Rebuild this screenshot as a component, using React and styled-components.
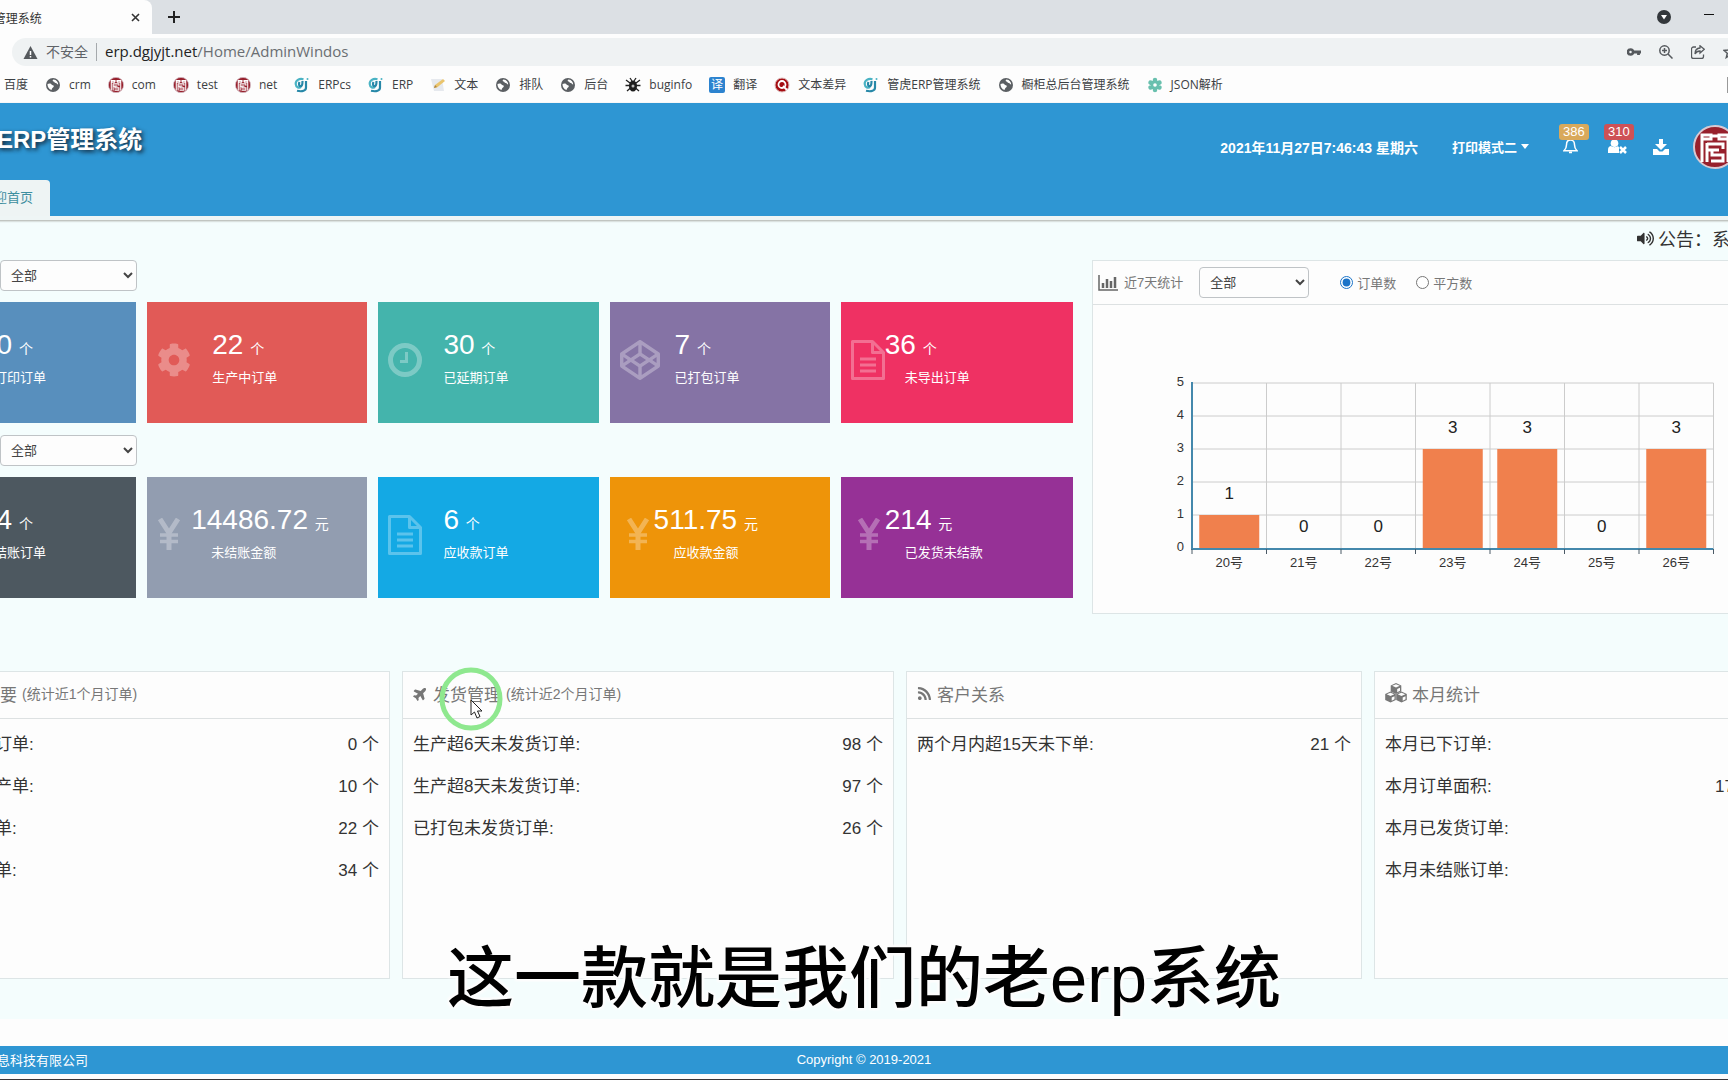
import React, { useState } from 'react'
import styled, { createGlobalStyle } from 'styled-components'
import { FaCog, FaCodepen, FaPlane, FaRss, FaVolumeUp } from 'react-icons/fa'

const bookmarks = [
  { icon: null, text: '百度' },
  { icon: 'globe', text: 'crm' },
  { icon: 'seal', text: 'com' },
  { icon: 'seal', text: 'test' },
  { icon: 'seal', text: 'net' },
  { icon: 'swirl', text: 'ERPcs' },
  { icon: 'swirl', text: 'ERP' },
  { icon: 'note', text: '文本' },
  { icon: 'globe', text: '排队' },
  { icon: 'globe', text: '后台' },
  { icon: 'bug', text: 'buginfo' },
  { icon: 'yi', text: '翻译' },
  { icon: 'diff', text: '文本差异' },
  { icon: 'swirl', text: '管虎ERP管理系统' },
  { icon: 'globe', text: '橱柜总后台管理系统' },
  { icon: 'flower', text: 'JSON解析' },
]

const orderCards = [
  { color: '#588fbd', icon: 'file', value: '10', unit: '个', label: '未打印订单' },
  { color: '#e15a57', icon: 'cog', value: '22', unit: '个', label: '生产中订单' },
  { color: '#44b4ac', icon: 'clock', value: '30', unit: '个', label: '已延期订单' },
  { color: '#8573a5', icon: 'codepen', value: '7', unit: '个', label: '已打包订单' },
  { color: '#ef3163', icon: 'file', value: '36', unit: '个', label: '未导出订单', wide: true },
]

const moneyCards = [
  { color: '#4d5860', icon: 'file', value: '34', unit: '个', label: '未结账订单' },
  { color: '#929db0', icon: 'yen', value: '14486.72', unit: '元', label: '未结账金额', wide: true },
  { color: '#14a9e4', icon: 'file', value: '6', unit: '个', label: '应收款订单' },
  { color: '#ee9409', icon: 'yen', value: '511.75', unit: '元', label: '应收款金额', wide: true, indent: true },
  { color: '#963196', icon: 'yen', value: '214', unit: '元', label: '已发货未结款', wide: true, indent: true },
]

const days = [
  { day: '20号', count: 1 },
  { day: '21号', count: 0 },
  { day: '22号', count: 0 },
  { day: '23号', count: 3 },
  { day: '24号', count: 3 },
  { day: '25号', count: 0 },
  { day: '26号', count: 3 },
]

const panels = [
  {
    icon: 'list', title: '订单概要', note: '(统计近1个月订单)',
    rows: [['未打印的订单:', '0 个'], ['未排产生产单:', '10 个'], ['生产中订单:', '22 个'], ['未结账订单:', '34 个']],
  },
  {
    icon: 'plane', title: '发货管理', note: '(统计近2个月订单)',
    rows: [['生产超6天未发货订单:', '98 个'], ['生产超8天未发货订单:', '97 个'], ['已打包未发货订单:', '26 个']],
  },
  {
    icon: 'rss', title: '客户关系',
    rows: [['两个月内超15天未下单:', '21 个']],
  },
  {
    icon: 'cubes', title: '本月统计', area: true,
    rows: [['本月已下订单:', ''], ['本月订单面积:', '17'], ['本月已发货订单:', ''], ['本月未结账订单:', '']],
  },
]

function Seal({ size }) {
  return (
    <svg width={size} height={size} viewBox='0 0 44 44' aria-hidden='true'>
      <circle cx='22' cy='22' r='21' fill='#97202c' stroke='#d9c9d2' strokeWidth='2' />
      <g fill='none' stroke='#fff' strokeWidth='3'>
        <path d='M9 37V10h9v4H9M35 37V10H26v4h9M18 11h8M14 19h16v5M14 18v19M14 25h12M19 25v5h11v6H18' />
      </g>
    </svg>
  )
}

function BookmarkIcon({ name }) {
  if (name === 'seal') return <Seal size={16} />
  return (
    <svg width='16' height='16' viewBox='0 0 16 16' aria-hidden='true'>
      {name === 'globe' && <>
        <circle cx='8' cy='8' r='7' fill='#5b5f63' />
        <path d='M2.500 7c2-1 3.500-.5 4 .5s2.300.3 2.300 1.800-1.500 1.200-1.700 2.200L6.500 13C4 12.300 2.300 10 2.500 7zM8.500 2.500c-1.200.5-1 1.800 0 2 1 .2.800 1.500 2.300 1.500 1.200 0 1 1.600 2.400 1.600C13.200 5 11.500 2.800 8.500 2.500z' fill='#fff' />
      </>}
      {name === 'swirl' && <>
        <path d='M9.500 2.200C5 1 1.500 3.500 1.700 7s3.800 4.500 5.300 3' fill='none' stroke='#4ab3c4' strokeWidth='2.200' />
        <path d='M5.500 5c-1 2-.5 4.200 1.200 4.200S8.500 6 8.500 4M12 4v6.500c0 3.200-3.500 4.500-9 3.300' fill='none' stroke='#2788a8' strokeWidth='2.200' />
        <circle cx='13.500' cy='2' r='1' fill='#4ab3c4' />
      </>}
      {name === 'note' && <>
        <path d='M1 2h11l2 12H4z' fill='#e6e9ee' />
        <path d='M4 11l1-3 8-6 2 2-8 6.500z' fill='#eac46c' />
        <path d='M4 11l1-3 2 2z' fill='#ab8444' />
      </>}
      {name === 'bug' && <>
        <path d='M1 3l4 3M15 3l-4 3M0.500 8.500H5M15.500 8.500H11M2 14l3.500-3M14 14l-3.500-3M5 1l2 3M11 1L9 4' stroke='#222' strokeWidth='1.300' />
        <ellipse cx='8' cy='9' rx='4' ry='5.500' fill='#1d1d1d' />
        <circle cx='8' cy='9' r='1.500' fill='#bbb' />
      </>}
      {name === 'yi' && <>
        <rect width='16' height='16' rx='2' fill='#2c83cf' />
        <text x='8' y='12' textAnchor='middle' fontSize='12' fill='#fff'>译</text>
      </>}
      {name === 'diff' && <>
        <circle cx='8' cy='8' r='7' fill='#a50d12' stroke='#dbb' />
        <circle cx='8' cy='7.500' r='3.500' fill='none' stroke='#fff' strokeWidth='1.800' />
        <path d='M9 9l4 4' stroke='#fff' strokeWidth='1.800' />
      </>}
      {name === 'flower' && <>
        <g stroke='#69c0ae' strokeWidth='4.500' strokeLinecap='round'>
          <path d='M8 3v10M3.500 5.500l9 5M12.500 5.500l-9 5' />
        </g>
        <circle cx='8' cy='8' r='1.800' fill='#fff' />
      </>}
    </svg>
  )
}

function CardIcon({ name }) {
  if (name === 'cog') return <FaCog size={34} />
  if (name === 'codepen') return <FaCodepen size={40} />
  if (name === 'clock') {
    return (
      <svg width='34' height='34' viewBox='0 0 34 34' fill='none' stroke='currentColor'>
        <circle cx='17' cy='17' r='14.500' strokeWidth='5' />
        <path d='M18.500 9v9.500H12' strokeWidth='3' />
      </svg>
    )
  }
  if (name === 'yen') {
    return (
      <svg width='24' height='34' viewBox='4 3 24 34' fill='none' stroke='currentColor'>
        <path d='M7 4l9 14 9-14M16 17v18' strokeWidth='5' />
        <path d='M7 20h18M7 26.500h18' strokeWidth='3.500' />
      </svg>
    )
  }
  return (
    <svg width='34' height='40' viewBox='0 0 34 40' fill='none' stroke='currentColor' strokeWidth='3' strokeLinejoin='round'>
      <path d='M1.500 1.500h20l11 11v26h-31zM21.500 1.500v11h11M9 19h16M9 25h16M9 31h16' />
    </svg>
  )
}

function PanelIcon({ name }) {
  if (name === 'plane') return <TiltedPlane size={15} />
  if (name === 'rss') return <FaRss size={15} />
  if (name === 'cubes') {
    return (
      <svg width='22' height='20' viewBox='0 0 22 20'>
        {[[11, 5.500], [5.500, 14], [16.500, 14]].map(([x, y]) => (
          <g key={x} transform={`translate(${x} ${y})`}>
            <path d='M0-5.500L5.300-3v6L0 5.500-5.300 3v-6z' fill='#777' />
            <path d='M-3.800-2.700L0-4.300l3.800 1.600L0-1.100zM1.200.5L4-.8v3L1.200 3.700z' fill='#fdfdfd' />
          </g>
        ))}
      </svg>
    )
  }
  return (
    <svg width='17' height='16' viewBox='0 0 17 16' stroke='#777' strokeWidth='2'>
      <path d='M0 3h3M5 3h12M0 8h3M5 8h12M0 13h3M5 13h12' />
    </svg>
  )
}

function StatRow({ id, cards }) {
  return (
    <>
      <FilterRow>
        <Select id={id} aria-label='客户' $width='137px'>
          <option>全部</option>
        </Select>
      </FilterRow>
      <Cards>
        {cards.map((card) => (
          <Card key={card.label} $color={card.color}>
            <CardMark $indent={card.indent}>
              <CardIcon name={card.icon} />
            </CardMark>
            <CardValue $wide={card.wide}>
              {card.value} <small>{card.unit}</small>
            </CardValue>
            <CardLabel $wide={card.wide}>{card.label}</CardLabel>
          </Card>
        ))}
      </Cards>
    </>
  )
}

function WeekChart() {
  const left = 99
  const base = 243
  const step = 33
  const col = 74.5
  const right = left + col * days.length
  return (
    <svg width='718' height='308' viewBox='0 0 718 308' role='img' aria-label='近7天统计'>
      {[1, 2, 3, 4, 5].map((n) => (
        <line key={n} x1={left} x2={right} y1={base - n * step} y2={base - n * step} stroke='#ccc' />
      ))}
      {days.map((d, i) => (
        <line key={d.day} x1={left + (i + 1) * col} x2={left + (i + 1) * col} y1={base - 5 * step} y2={base} stroke='#ccc' />
      ))}
      {[0, 1, 2, 3, 4, 5].map((n) => (
        <text key={n} x='91' y={base - n * step + 3} textAnchor='end' fontSize='13' fill='#333'>{n}</text>
      ))}
      {days.map((d, i) => {
        const mid = left + (i + 0.5) * col
        return (
          <g key={d.day}>
            <rect x={mid - 30} y={base - d.count * step} width='60' height={d.count * step} fill='#f0804d' />
            <text x={mid} y={base - d.count * step - 16} textAnchor='middle' fontSize='17' fill='#222'>{d.count}</text>
            <text x={mid} y='262' textAnchor='middle' fontSize='13' fill='#333'>{d.day}</text>
          </g>
        )
      })}
      <path d={`M${left} ${base - 5 * step - 1}V${base + 1}H${right}`} fill='none' stroke='#4488ac' strokeWidth='2' />
      {[0, 1, 2, 3, 4, 5, 6, 7].map((n) => (
        <line key={n} x1={left + n * col} x2={left + n * col} y1={base + 1} y2={base + 6} stroke='#4b5a66' />
      ))}
    </svg>
  )
}

function App() {
  const [mode, setMode] = useState('orders')

  return (
    <Screen>
      <GlobalStyle />
      <Page>
        <TabStrip>
          <BrowserTab>
            <span>管虎ERP管理系统</span>
            <IconButton aria-label='关闭'>
              <svg width='9' height='9' viewBox='0 0 9 9' stroke='#333' strokeWidth='1.600'><path d='M1 1l7 7M8 1L1 8' /></svg>
            </IconButton>
          </BrowserTab>
          <IconButton aria-label='新标签页'>
            <svg width='12' height='12' viewBox='0 0 12 12' stroke='#222' strokeWidth='2'><path d='M6 0v12M0 6h12' /></svg>
          </IconButton>
          <WindowButtons>
            <svg width='16' height='16' viewBox='0 0 16 16'>
              <circle cx='8' cy='8' r='7' fill='#33373b' />
              <path d='M5 6h6l-3 4.500z' fill='#fff' />
            </svg>
            <svg width='10' height='6' viewBox='0 0 10 6'><path d='M0 0.500h10' stroke='#111' /></svg>
          </WindowButtons>
        </TabStrip>
        <Toolbar>
          <AddressBar>
            <svg width='15' height='13' viewBox='0 0 14 13'>
              <path d='M7 0l7 13H0z' fill='#55595d' />
              <path d='M7 5v4M7 10v1.500' stroke='#fff' strokeWidth='1.500' />
            </svg>
            <Unsafe>不安全</Unsafe>
            <Url>erp.dgjyjt.net<span>/Home/AdminWindos</span></Url>
            <AddressTools>
              <svg width='14' height='14' viewBox='0 0 14 14' fill='none' stroke='#55595d'>
                <circle cx='3.500' cy='7' r='2.500' strokeWidth='2.500' />
                <path d='M6 7h8M11.500 7v3' strokeWidth='2.800' />
              </svg>
              <svg width='14' height='14' viewBox='0 0 14 14' fill='none' stroke='#55595d' strokeWidth='1.500'>
                <circle cx='5.500' cy='5.500' r='4.700' /><path d='M9 9l4.500 4.500M3 5.500h5M5.500 3v5' />
              </svg>
              <svg width='14' height='14' viewBox='0 0 14 14' fill='none' stroke='#55595d' strokeWidth='1.300'>
                <path d='M5 2H2.500a2 2 0 0 0-2 2v7.500a2 2 0 0 0 2 2h8a2 2 0 0 0 2-2V9.500M9 .8l4.300 3.500L9 8V6C6.500 6 5 7 4 9c0-3.500 2-5.800 5-6z' />
              </svg>
              <svg width='14' height='14' viewBox='0 0 14 14' fill='none' stroke='#55595d' strokeWidth='1.500'>
                <path d='M7 1l1.700 4 4.300.4-3.300 2.900 1 4.200L7 10.200l-3.700 2.300 1-4.200L1 5.400 5.300 5z' />
              </svg>
            </AddressTools>
          </AddressBar>
        </Toolbar>
        <Bookmarks>
          {bookmarks.map((mark) => (
            <a href='#bookmark' key={mark.text}>
              {mark.icon && <BookmarkIcon name={mark.icon} />}
              {mark.text}
            </a>
          ))}
          <ReadingList width='14' height='16' viewBox='0 0 14 16'>
            <path d='M1 0v16M1 1h12v14H1' fill='none' stroke='#999' strokeWidth='2' />
          </ReadingList>
        </Bookmarks>

        <Header>
          <HeaderTop>
            <h1>管虎ERP管理系统</h1>
            <HeaderTools>
              <time>2021年11月27日7:46:43 星期六</time>
              <PrintMode>打印模式二<i /></PrintMode>
              <HeaderButton aria-label='通知'>
                <svg width='15' height='15' viewBox='0 0 15 15' fill='none' stroke='#fff' strokeWidth='1.500'>
                  <path d='M7.500 1c-3 0-4 2.200-4 4.700 0 3-1 4.600-2.500 6h13c-1.500-1.400-2.500-3-2.500-6C11.500 3.200 10.500 1 7.500 1zM6 13.500h3' />
                </svg>
                <Badge $color='#d9a95b'>386</Badge>
              </HeaderButton>
              <HeaderButton aria-label='客户'>
                <svg width='19' height='15' viewBox='0 0 19 15' fill='#fff'>
                  <circle cx='6.500' cy='4.300' r='3.800' />
                  <path d='M0 14v-3c0-3 1.500-4 3-4 1 .8 2 1.200 3.500 1.200S9 7.800 10 7l1 1.500V14z' />
                  <path d='M12 8l6 6M18 8l-6 6' stroke='#fff' strokeWidth='2.500' />
                </svg>
                <Badge $color='#ce5156'>310</Badge>
              </HeaderButton>
              <DownloadButton aria-label='下载'>
                <svg width='16' height='16' viewBox='0 0 16 16' fill='#fff'>
                  <path d='M6 0h4v5h4l-6 6-6-6h4z' />
                  <path d='M0 10h4l2.500 2.500h3L12 10h4v6H0z' />
                </svg>
              </DownloadButton>
              <Seal size={44} />
            </HeaderTools>
          </HeaderTop>
          <PageTab href='#home'>欢迎首页</PageTab>
        </Header>

        <Main>
          <Notice>
            <FaVolumeUp size={17} />
            <span>公告：系统</span>
          </Notice>
          <Overview>
            <Stats>
              <StatRow id='order-filter' cards={orderCards} />
              <StatRow id='money-filter' cards={moneyCards} />
            </Stats>
            <ChartPanel>
              <ChartHead>
                <svg width='20' height='16' viewBox='0 0 20 16' fill='none' stroke='#666'>
                  <path d='M1 0v15h19' strokeWidth='1.500' />
                  <path d='M5 13V8M9 13V4M13 13V6M17 13V2' strokeWidth='2.500' />
                </svg>
                <label htmlFor='chart-filter'>近7天统计</label>
                <Select id='chart-filter' $width='110px'>
                  <option>全部</option>
                </Select>
                <Radios>
                  <label>
                    <input type='radio' name='mode' checked={mode === 'orders'} onChange={() => setMode('orders')} />
                    订单数
                  </label>
                  <label>
                    <input type='radio' name='mode' checked={mode === 'area'} onChange={() => setMode('area')} />
                    平方数
                  </label>
                </Radios>
              </ChartHead>
              <WeekChart />
            </ChartPanel>
          </Overview>
          <Panels>
            {panels.map((panel) => (
              <Panel key={panel.title}>
                <h2>
                  <PanelIcon name={panel.icon} />
                  {panel.title}
                  {panel.note && <small>{panel.note}</small>}
                </h2>
                <ul>
                  {panel.rows.map(([name, value]) => (
                    <li key={name}>
                      <span>{name}</span>
                      <PanelValue $area={panel.area}>{value}</PanelValue>
                    </li>
                  ))}
                </ul>
              </Panel>
            ))}
          </Panels>
        </Main>

        <Footer>
          <span>东莞市管虎信息科技有限公司</span>
          <strong>Copyright © 2019-2021</strong>
        </Footer>
        <Taskbar />
      </Page>

      <Pointer width='66' height='66' viewBox='0 0 66 66' aria-hidden='true'>
        <circle cx='33' cy='33' r='29' fill='none' stroke='#8fe88f' strokeWidth='5' />
        <path d='M33 34v15l3.500-3 2.500 6 3-1.500-2.500-5.500H44z' fill='#fff' stroke='#222' />
      </Pointer>
      <Caption>这一款就是我们的老erp系统</Caption>
    </Screen>
  )
}

export default App

const GlobalStyle = createGlobalStyle`
  *{
    box-sizing: border-box;
  }
  body{
    margin: 0;
    background: #fdfdfd;
    font-family: "Liberation Sans", "Noto Sans CJK SC", sans-serif;
    font-size: 13px;
    color: #333;
  }
  button, select{
    font-family: inherit;
  }
`

const Screen = styled.div`
  position: relative;
  overflow: hidden;
`

// the page is wider than the window on both sides
const Page = styled.div`
  display: flex;
  flex-direction: column;
  min-height: 100vh;
  margin: 0 -96px;
`

const IconButton = styled.button`
  display: flex;
  padding: 0;
  border: 0;
  background: none;
`

const TabStrip = styled.div`
  display: flex;
  align-items: center;
  gap: 16px;
  height: 34px;
  background: #dce0e4;
`

const BrowserTab = styled.div`
  display: flex;
  align-items: center;
  justify-content: space-between;
  width: 248px;
  height: 34px;
  padding: 0 12px 0 41px;
  border-radius: 0 8px 0 0;
  background: #fdfdfd;
  font-size: 12px;
`

const WindowButtons = styled.div`
  display: flex;
  align-items: center;
  gap: 32px;
  margin-left: auto;
  padding-right: 110px;
`

const Toolbar = styled.div`
  padding: 4px 0 0 108px;
`

const AddressBar = styled.div`
  display: flex;
  align-items: center;
  height: 28px;
  padding: 0 87px 0 11px;
  border-radius: 14px 0 0 14px;
  background: #eff2f3;
`

const Unsafe = styled.span`
  margin: 0 8px;
  padding-right: 8px;
  border-right: 1px solid #a5a9ac;
  font-size: 14px;
  line-height: 18px;
  color: #5f6368;
`

const Url = styled.span`
  font-family: "Open Sans", "Noto Sans", sans-serif;
  font-size: 15px;
  line-height: 20px;
  padding-bottom: 2px;
  color: #222;
  span{
    color: #6a6e72;
  }
`

const AddressTools = styled.div`
  display: flex;
  gap: 18px;
  margin-left: auto;
`

const Bookmarks = styled.nav`
  display: flex;
  align-items: center;
  gap: 17px;
  height: 37px;
  padding-left: 100px;
  a{
    display: flex;
    align-items: center;
    gap: 8px;
    font-family: "Open Sans", "Noto Sans CJK SC", sans-serif;
    font-size: 12px;
    line-height: 16px;
    white-space: nowrap;
    color: #3c4043;
    text-decoration: none;
  }
`

const ReadingList = styled.svg`
  margin: 0 83px 0 auto;
`

const Header = styled.header`
  height: 117px;
  border-bottom: 4px solid #eef5f5;
  background: #2e96d3;
  box-shadow: 0 1px 2px #a9aaa4;
  color: #fff;
  z-index: 1;
`

const HeaderTop = styled.div`
  display: flex;
  align-items: center;
  justify-content: space-between;
  height: 77px;
  padding: 0 87px 0 45px;
  h1{
    margin: 0;
    padding-bottom: 4px;
    font-size: 24px;
    line-height: 32px;
    text-shadow: 2px 2px 4px #123;
  }
`

const HeaderTools = styled.div`
  display: flex;
  align-items: center;
  padding-top: 10px;
  gap: 20px;
  font-weight: bold;
  time{
    margin-right: 14px;
    font-size: 14px;
  }
`

const PrintMode = styled.button`
  display: flex;
  align-items: center;
  gap: 4px;
  margin-right: 14px;
  padding: 0;
  border: 0;
  background: none;
  color: #fff;
  font-size: 13px;
  font-weight: bold;
  i{
    border: 4px solid transparent;
    border-top: 5px solid #fff;
    border-bottom: 0;
  }
`

const HeaderButton = styled.button`
  position: relative;
  display: flex;
  width: 25px;
  padding: 0;
  border: 0;
  background: none;
`

const DownloadButton = styled(HeaderButton)`
  width: 20px;
`

const Badge = styled.span`
  position: absolute;
  bottom: 14px;
  left: -4px;
  padding: 0 4px;
  border-radius: 3px;
  background: ${({ $color }) => $color};
  color: #fff;
  font-size: 13px;
  line-height: 16px;
`

const PageTab = styled.a`
  display: inline-block;
  height: 36px;
  padding: 0 17px 0 77px;
  border-radius: 0 4px 0 0;
  background: #eef4f4;
  color: #3d8f9f;
  font-size: 13px;
  line-height: 36px;
  text-decoration: none;
`

const Main = styled.main`
  flex: 1;
  padding: 0 12px 40px;
  background: #f4fdfd;
`

const Notice = styled.div`
  display: flex;
  align-items: center;
  gap: 4px;
  width: 175px;
  height: 36px;
  margin: 0 0 4px auto;
  font-size: 18px;
`

const Overview = styled.section`
  display: grid;
  grid-template-columns: 1157fr 720fr;
  gap: 19px;
  align-items: start;
`

const Stats = styled.div`
  min-width: 0;
`

const FilterRow = styled.div`
  height: 42px;
  padding-left: 84px;
`

const Select = styled.select`
  width: ${({ $width }) => $width};
  height: 31px;
  padding: 0 2px 0 6px;
  border: 1px solid #bfc3c6;
  border-radius: 4px;
  background: #fdfdfd;
  color: #444;
  font-size: 13px;
`

const Cards = styled.div`
  display: grid;
  grid-template-columns: 220fr 220fr 220fr 220fr 232fr;
  gap: 11px;
  margin-bottom: 12px;
`

const Card = styled.article`
  position: relative;
  height: 121px;
  padding-top: 27px;
  background: ${({ $color }) => $color};
  color: #fff;
`

const CardMark = styled.div`
  position: absolute;
  top: 36px;
  left: ${({ $indent }) => ($indent ? '16px' : '10px')};
  display: flex;
  align-items: center;
  height: 44px;
  opacity: .3;
`

const CardValue = styled.div`
  position: relative;
  padding-left: ${({ $wide }) => ($wide ? '44px' : '65px')};
  font-size: 28px;
  line-height: 32px;
  small{
    margin-left: -1px;
    font-size: 14px;
  }
`

const CardLabel = styled.div`
  padding: 3px 0 0 ${({ $wide }) => ($wide ? '64px' : '65px')};
  font-size: 13px;
  line-height: 20px;
`

const ChartPanel = styled.div`
  min-width: 0;
  border: 1px solid #dde5e6;
  background: #fdfdfd;
  svg{
    display: block;
  }
`

const ChartHead = styled.div`
  display: flex;
  align-items: center;
  height: 44px;
  padding-left: 5px;
  border-bottom: 1px solid #dde1e2;
  color: #777;
  > label{
    padding: 0 16px 2px 6px;
  }
`

const Radios = styled.div`
  display: flex;
  gap: 20px;
  margin-left: 31px;
  label{
    display: flex;
    align-items: center;
    gap: 4px;
  }
  input{
    width: 13px;
    height: 13px;
    margin: 0;
    accent-color: #1a73c8;
  }
`

const Panels = styled.section`
  display: grid;
  grid-template-columns: 474fr 492fr 456fr 438fr;
  gap: 12px;
  margin-top: 57px;
`

const Panel = styled.section`
  height: 308px;
  border: 1px solid #dde5e6;
  background: #fdfdfd;
  font-size: 17px;
  h2{
    display: flex;
    align-items: center;
    gap: 5px;
    height: 47px;
    margin: 0;
    padding: 0 10px 4px;
    border-bottom: 1px solid #dde1e2;
    font-size: 17px;
    font-weight: normal;
    color: #777;
    small{
      font-size: 14px;
    }
  }
  ul{
    margin: 0;
    padding: 5px 10px;
    list-style: none;
  }
  li{
    display: flex;
    align-items: baseline;
    justify-content: space-between;
    height: 42px;
    line-height: 42px;
  }
`

const TiltedPlane = styled(FaPlane)`
  transform: rotate(-45deg);
`

const PanelValue = styled.span`
  min-width: ${({ $area }) => ($area ? '86px' : '0')};
`

const Footer = styled.footer`
  display: grid;
  grid-template-columns: 1fr auto 1fr;
  align-items: center;
  height: 28px;
  margin-top: 27px;
  padding: 0 15px 2px;
  background: #2e96d3;
  color: #fff;
  strong{
    font-weight: normal;
  }
`

const Taskbar = styled.div`
  height: 2px;
  margin-top: 5px;
  background: #3a3538;
`

const Pointer = styled.svg`
  position: absolute;
  top: 666px;
  left: 438px;
  pointer-events: none;
`

const Caption = styled.p`
  position: absolute;
  right: 0;
  bottom: 54px;
  left: 0;
  margin: 0;
  font-family: "Liberation Sans", "Noto Sans CJK SC", sans-serif;
  font-size: 67px;
  font-weight: 500;
  line-height: 96px;
  text-align: center;
  color: #000;
  text-shadow: 0 0 4px #fdfdfd, 2px 2px 2px #fdfdfd, -2px -2px 2px #fdfdfd, 2px -2px 2px #fdfdfd, -2px 2px 2px #fdfdfd;
`
